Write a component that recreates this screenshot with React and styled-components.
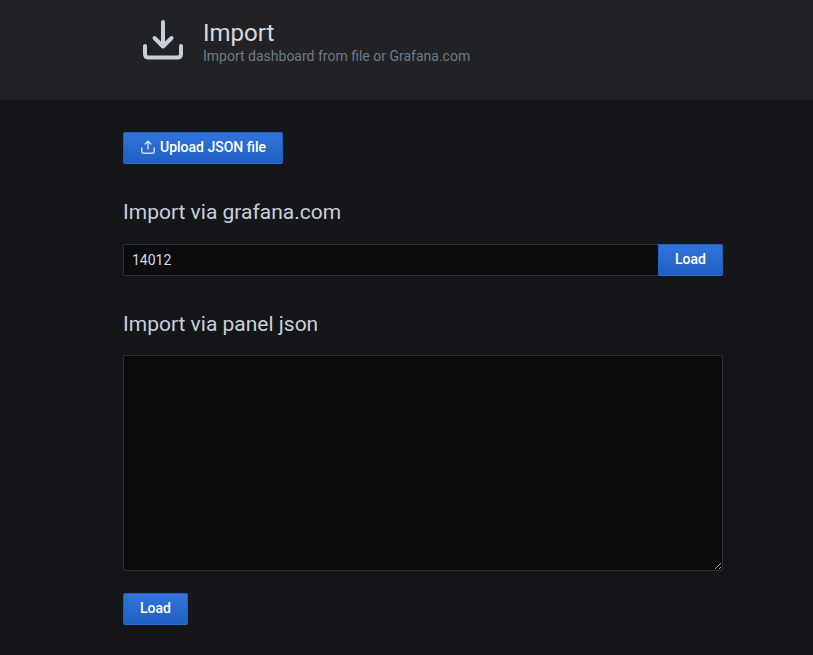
import React from "react";
import styled, { createGlobalStyle } from "styled-components";

const Global = createGlobalStyle`
  html, body { margin: 0; padding: 0; background: #141619; }
  body { font-family: Roboto, "Liberation Sans", sans-serif; color: #c7d0d9; font-size: 14px; height: 655px; overflow: hidden; }
  * { box-sizing: border-box; }
`;

const Header = styled.header`
  height: 100px;
  background: #212226;
  display: flex;
  align-items: flex-start;
  padding: 19px 0 0 142px;
  gap: 19px;
`;
const HeaderIcon = styled.svg`
  width: 42px;
  height: 42px;
  flex: none;
  display: block;
`;
const HeaderText = styled.div`
  display: flex;
  flex-direction: column;
  padding-top: 1px;
`;
const Title = styled.h1`
  margin: 0;
  font-size: 24px;
  line-height: 26px;
  font-weight: 400;
  color: #d8d9da;
`;
const Subtitle = styled.div`
  font-size: 14px;
  line-height: 18px;
  margin-top: 1px;
  color: #6f7b85;
`;
const Main = styled.main`
  width: 600px;
  margin-left: 123px;
  padding-top: 32px;
  display: flex;
  flex-direction: column;
  align-items: stretch;
`;
const Button = styled.button`
  height: 32px;
  padding: 0 0 2px;
  display: inline-flex;
  align-items: center;
  justify-content: center;
  gap: 4px;
  font-family: inherit;
  font-size: 14px;
  font-weight: 500;
  white-space: nowrap;
  color: #fff;
  background: linear-gradient(180deg, #3274d9 0%, #1f60c4 100%);
  border: 1px solid #1f60c4;
  border-bottom-color: #2f6fd0;
  border-radius: 2px;
  flex: none;
  align-self: flex-start;
  ${(p) => p.$joined && "border-radius: 0 2px 2px 0;"}
  width: ${(p) => p.$width}px;
`;
const ButtonIcon = styled.svg`
  width: 16px;
  height: 16px;
  flex: none;
`;
const SectionTitle = styled.h3`
  margin: ${(p) => p.$top}px 0 ${(p) => p.$bottom}px;
  font-size: 21px;
  line-height: 24px;
  font-weight: 400;
  color: #c7d0d9;
`;
const InputRow = styled.div`
  display: flex;
  height: 32px;
`;
const Input = styled.input`
  flex: 1;
  min-width: 0;
  height: 32px;
  padding: 0 8px;
  font-family: inherit;
  font-size: 14px;
  color: #d3dae1;
  background: #0b0c0e;
  border: 1px solid #2c3235;
  border-right: none;
  border-radius: 2px 0 0 2px;
  outline: none;
`;
const TextArea = styled.textarea`
  display: block;
  width: 600px;
  height: 216px;
  background: #0b0c0e;
  border: 1px solid #2c3235;
  border-radius: 2px;
  color: #c7d0d9;
  outline: none;
  resize: vertical;
  margin: 0 0 22px;
`;

export default function App() {
  return (
    <>
      <Global />
      <Header>
        <HeaderIcon viewBox="0 0 42 42" fill="none" stroke="#c7d0d9" strokeLinecap="round" strokeLinejoin="round">
          <path d="M21 3V27" strokeWidth="4" />
          <path d="M12.5 19L21 27.5L29.5 19" strokeWidth="4" />
          <path d="M3 27V35C3 37 4 38.5 6.5 38.5H35.5C38 38.5 39 37 39 35V27" strokeWidth="4" />
        </HeaderIcon>
        <HeaderText>
          <Title>Import</Title>
          <Subtitle>Import dashboard from file or Grafana.com</Subtitle>
        </HeaderText>
      </Header>
      <Main>
        <Button $width={160}>
          <ButtonIcon viewBox="0 0 16 16" fill="none" stroke="#cfe0f8" strokeWidth="1.4" strokeLinecap="round" strokeLinejoin="round">
            <path d="M8 10V2.4" />
            <path d="M5.2 5L8 2.2L10.8 5" />
            <path d="M1.8 9V12.6C1.8 13.6 2.5 14.3 3.5 14.3H12.5C13.5 14.3 14.2 13.6 14.2 12.6V9" />
          </ButtonIcon>
          Upload JSON file
        </Button>
        <SectionTitle $top={36} $bottom={20}>Import via grafana.com</SectionTitle>
        <InputRow>
          <Input defaultValue="14012" />
          <Button $joined $width={65}>Load</Button>
        </InputRow>
        <SectionTitle $top={36} $bottom={19}>Import via panel json</SectionTitle>
        <TextArea />
        <Button $width={65}>Load</Button>
      </Main>
    </>
  );
}
